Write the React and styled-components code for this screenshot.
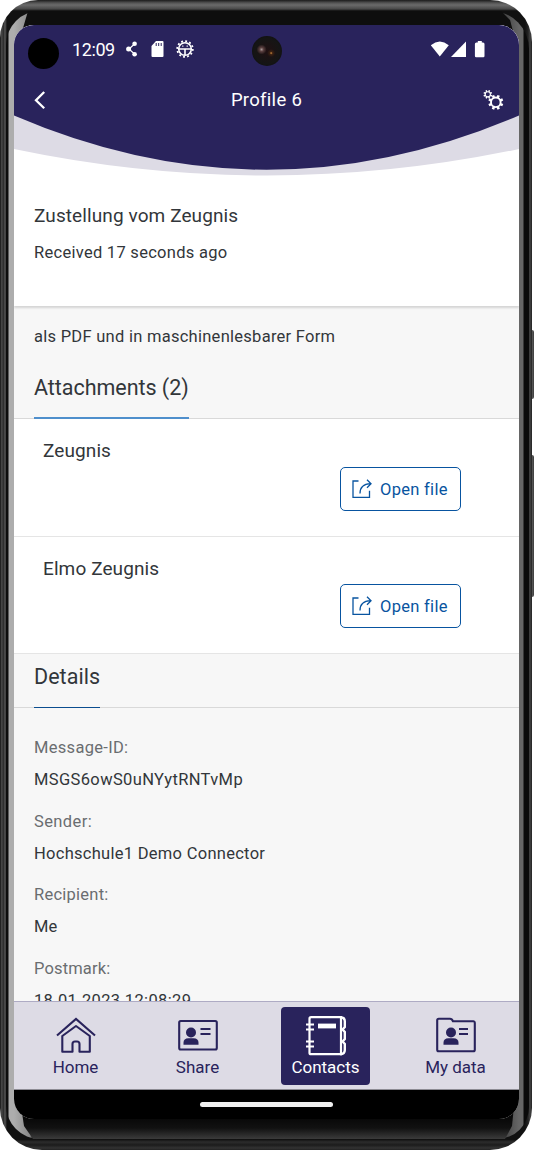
import React from 'react';
import styled, { createGlobalStyle } from 'styled-components';

const Global = createGlobalStyle`
  * { box-sizing: border-box; }
  body { margin: 0; background: #fff; font-family: Roboto, "Liberation Sans", sans-serif; color: #32363a; }
  svg { display: block; }
`;

const NAVY = '#29235c';

const Stage = styled.div`
  position: relative;
  width: 534px;
  height: 1150px;
  overflow: hidden;
`;
const SideKey = styled.i`
  position: absolute;
  left: 530px;
  top: ${p => p.$top}px;
  width: 4px;
  height: ${p => p.$height}px;
  border-radius: 0 2px 2px 0;
  background: linear-gradient(90deg, #222, #5a5a5a 70%, #333);
`;
const Shell = styled.div`
  position: relative;
  width: 532px;
  height: 1150px;
  border-radius: 38px 42px 42px 42px;
  padding: 11px 3px 11px 6px;
  background:
    linear-gradient(180deg, #1b1b1b 0, #555 3px, #6a6a6a 5px, #484848 9px, #0c0c0c 11px) 0 0 / 100% 11px no-repeat,
    linear-gradient(180deg, #0c0c0c 0, #2c2c2c 3px, #1c1c1c 6px, #333 9px, #222 11px) 0 100% / 100% 11px no-repeat,
    linear-gradient(90deg, #111 0, #555 2px, #222 3px, #555 5px, #111 7px, #111 525px, #222 528px, #444 530px, #222 532px);
`;
const Glass = styled.div`
  height: 1128px;
  border-radius: 34px 38px 32px 34px;
  padding: 14px 10px 20px 8px;
  background:
    linear-gradient(90deg, #0c0c0c 0, #0c0c0c 2px, #adadad 3px, #adadad 8px, #888 24px, #111 27px, #111 495px, #444 498px, #666 513px, #666 517px, #0a0a0a 518px);
`;
const TopBezel = styled.div`
  position: absolute;
  left: 21px;
  top: 11px;
  width: 493px;
  height: 24px;
  background: #0e0e0e;
  clip-path: polygon(7px 0, 480px 0, 489px 9px, 493px 24px, 0 24px);
`;
const BottomBezel = styled.div`
  position: absolute;
  left: 21px;
  top: 1106px;
  width: 493px;
  height: 33px;
  background: linear-gradient(180deg, #080808 12px, #111 22px, #3b3b3b 33px);
  clip-path: polygon(0 0, 493px 0, 491px 20px, 484px 33px, 12px 33px, 3px 20px);
`;
const Screen = styled.main`
  position: relative;
  width: 505px;
  height: 1094px;
  border-radius: 20px;
  overflow: hidden;
  display: flex;
  flex-direction: column;
  background: #f7f7f7;
`;
const Header = styled.header`
  display: grid;
  flex: none;
  height: 151px;
  background: #fff;
  color: #fff;
  > * { grid-area: 1 / 1; }
`;
const HeaderContent = styled.div`
  display: flex;
  flex-direction: column;
`;
const StatusBar = styled.div`
  display: flex;
  align-items: center;
  height: 48px;
  padding: 0 33px 0 14px;
`;
const Hole = styled.span`
  width: 31px;
  height: 31px;
  margin: 9px 13px 0 0;
  border-radius: 50%;
  background: #000;
`;
const Clock = styled.span`
  width: 53px;
  padding-top: 1px;
  font-size: 18px;
  line-height: 20px;
  letter-spacing: -0.4px;
`;
const Camera = styled.span`
  width: 30px;
  height: 30px;
  margin: 3px 0 0 58px;
  border-radius: 50%;
  background:
    radial-gradient(circle at 32% 45%, #a89a98 0, #5b4040 2px, transparent 5px),
    radial-gradient(circle at 64% 57%, #d08a3e 0, #3b2112 1.5px, transparent 4px),
    radial-gradient(circle, #201012 0, #151515 60%, #0b0b0b 100%);
`;
const TitleBar = styled.div`
  display: grid;
  grid-template-columns: 40px 1fr 40px;
  align-items: center;
  height: 54px;
  padding: 0 14px;
`;
const Title = styled.h1`
  margin: 0;
  text-align: center;
  font-size: 18.5px;
  font-weight: 400;
  letter-spacing: 0.3px;
`;
const Summary = styled.section`
  flex: none;
  height: 130px;
  padding: 28px 20px 0;
  background: #fff;
  box-shadow: 0 2px 2px rgba(0,0,0,.14);
  z-index: 1;
`;
const Line = styled.div`
  height: ${p => p.$h || 24}px;
  line-height: ${p => p.$h || 24}px;
  font-size: ${p => p.$size || 16}px;
  letter-spacing: ${p => p.$ls || 0}px;
  margin-bottom: ${p => p.$gap || 0}px;
  color: ${p => p.$muted ? '#6a6d70' : '#32363a'};
  white-space: nowrap;
`;
const Intro = styled.section`
  flex: none;
  height: 57px;
  padding: 19px 20px 0;
`;
const SectionHead = styled.div`
  flex: none;
  height: ${p => p.$height}px;
  padding-left: 20px;
  border-bottom: 1px solid #d9d9d9;
  display: flex;
`;
const SectionTitle = styled.h2`
  margin: 0 0 -1px;
  font-weight: 400;
  font-size: 21.5px;
  line-height: 28px;
  letter-spacing: ${p => p.$ls}px;
  padding-top: ${p => p.$pad}px;
  width: ${p => p.$width}px;
  border-bottom: ${p => p.$line};
  white-space: nowrap;
`;
const FileRow = styled.article`
  flex: none;
  height: ${p => p.$height}px;
  padding: 20px 58px 0 29px;
  background: #fff;
  border-bottom: 1px solid #e5e5e5;
`;
const OpenButton = styled.button`
  display: flex;
  align-items: center;
  gap: 8px;
  width: 121px;
  height: 44px;
  margin: ${p => p.$top}px 0 0 auto;
  padding: 0 0 0 11px;
  border: 1px solid #0854a0;
  border-radius: 5px;
  background: #fff;
  color: #0854a0;
  font: 400 16.5px Roboto, sans-serif;
  letter-spacing: 0.3px;
  white-space: nowrap;
`;
const Details = styled.section`
  flex: 1;
  min-height: 0;
  overflow: hidden;
  padding: 28px 20px 0;
`;
const Nav = styled.nav`
  flex: none;
  display: flex;
  height: 89px;
  padding: 5px 0 4px 17px;
  background: #dddbe5;
  border-top: 1px solid #aeabc4;
  border-bottom: 1px solid #8d8c94;
`;
const Tab = styled.a`
  display: flex;
  flex: none;
  flex-direction: column;
  align-items: center;
  width: 89px;
  height: 78px;
  margin-left: ${p => p.$gap}px;
  padding-top: 9px;
  border-radius: 4px;
  background: ${p => p.$active ? NAVY : 'transparent'};
  color: ${p => p.$active ? '#fff' : NAVY};
  font-size: 17px;
  line-height: 20px;
`;
const GestureBar = styled.footer`
  flex: none;
  display: flex;
  justify-content: center;
  height: 29px;
  padding-top: 12px;
  background: #000;
  &::before { content: ''; width: 133px; height: 5px; border-radius: 3px; background: #f0f0f0; }
`;
const Glyph = styled.svg`
  flex: none;
  margin-left: ${p => p.$left || 0};
`;

const Waves = () => (
  <svg width="505" height="151" viewBox="0 0 505 151">
    <path d="M0 0H505V124Q252.5 177 0 124Z" fill="#dddbe5" />
    <path d="M0 0H505V90.5Q252.5 199 0 90.5Z" fill={NAVY} />
  </svg>
);
const ShareDots = () => (
  <Glyph width="12" height="16" viewBox="0 0 12 16" fill="#fff" $left="1px">
    <path d="M9 2.5 3 8l6 5.5" fill="none" stroke="#fff" strokeWidth="1.2" />
    <circle cx="8.6" cy="2.7" r="2.3" /><circle cx="2.6" cy="8" r="2.5" /><circle cx="8.6" cy="13.3" r="2.3" />
  </Glyph>
);
const SdCard = () => (
  <Glyph width="13" height="16" viewBox="0 0 13 16" $left="13px">
    <path d="M5 0h6.5q1 0 1 1v14q0 1-1 1h-10q-1 0-1-1V5Z" fill="#fff" />
    <path d="M5.2 2v3M7.7 2v3M10.2 2v3" stroke={NAVY} strokeWidth="1" />
  </Glyph>
);
const Bug = () => (
  <Glyph width="18" height="18" viewBox="0 0 18 18" $left="12px" fill="none" stroke="#fff">
    <circle cx="9" cy="9" r="7.8" strokeWidth="1.8" strokeDasharray="1.9 2.18" />
    <circle cx="9" cy="9" r="6.3" strokeWidth="1.6" />
    <path d="M3 9h12M9 9v6" strokeWidth="1.6" />
    <path d="M6.2 6.2h1.2M10.6 6.2h1.2" strokeWidth="1.2" />
  </Glyph>
);
const Signals = () => (
  <Glyph width="56" height="17" viewBox="0 0 56 17" fill="#fff" $left="auto">
    <path d="M.8 4.2Q9.8 -3.2 18.8 4.2L9.8 15.5Z" />
    <path d="M36 .5V16H21Z" />
    <path d="M47.8 0h4v1.5H53q1.5 0 1.5 1.5V15q0 1.2-1.2 1.2h-7.2q-1.2 0-1.2-1.2V3q0-1.5 1.5-1.5h1.4Z" />
  </Glyph>
);
const Back = () => (
  <svg width="22" height="20" viewBox="0 0 22 20" fill="none" stroke="#fff" strokeWidth="2.3">
    <path d="M16.2 2 8 10.2l8.2 8" />
  </svg>
);
const Gear = ({ cx, cy, r, w, tooth }) => (
  <g fill="none" stroke="#fff">
    <circle cx={cx} cy={cy} r={r} strokeWidth={w} />
    {[0, 45, 90, 135, 180, 225, 270, 315].map(a => (
      <path key={a} d={`M${cx} ${cy - r}v${-tooth}`} strokeWidth={w * 1.35} transform={`rotate(${a + 22.5} ${cx} ${cy})`} />
    ))}
  </g>
);
const Gears = () => (
  <Glyph width="22" height="22" viewBox="0 0 22 22" $left="17px">
    <Gear cx={5.8} cy={5.3} r={2.6} w={1.1} tooth={1.8} />
    <Gear cx={13.8} cy={13.3} r={4.8} w={1.9} tooth={2.7} />
  </Glyph>
);
const ShareFile = () => (
  <Glyph width="20" height="20" viewBox="0 0 20 20" fill="none" stroke="#0854a0" strokeWidth="1.3">
    <path d="M6.5 2H1v16.3h16.5v-6.5" />
    <path d="M8 14.5C8 8.5 11 5.1 18.5 4.7M15 .8l4 3.9-4 4" />
  </Glyph>
);
const HomeIcon = () => (
  <svg width="40" height="41" viewBox="0 0 40 41" fill="none" stroke="currentColor" strokeWidth="2.1">
    <path d="M1 19.5 20 3l19 16.5" />
    <path d="M6.3 20v15.7H16.5V28q0-2.5 2.5-2.5h2q2.5 0 2.5 2.5v7.7h10.3V20L20 10Z" strokeLinejoin="round" />
  </svg>
);
const Person = () => (
  <g>
    <circle cx="13" cy="16.5" r="5" fill="currentColor" stroke="none" />
    <path d="M5.5 28.8v-2q0-4.5 5-4.5h5q5 0 5 4.5v2Z" fill="currentColor" stroke="none" />
  </g>
);
const CardIcon = () => (
  <svg width="40" height="41" viewBox="0 0 40 41" fill="none" stroke="currentColor" strokeWidth="2.1">
    <rect x="1.2" y="5" width="37.6" height="28.5" rx="1.5" />
    <Person />
    <path d="M22.5 13h10M22.5 18h10" />
  </svg>
);
const BookIcon = () => (
  <svg width="40" height="41" viewBox="0 0 40 41" fill="none" stroke="currentColor" strokeWidth="2.2">
    <path d="M36 1.2H5q-1.5 0-1.5 1.5v34q0 1.5 1.5 1.5H35V1" />
    <path d="M35 1.2q3.8.5 3.8 4V11l-2.2 2.5 2.2 2.5v7l-2.2 2.5 2.2 2.5v6q0 4-4.5 4.2" strokeWidth="2.4" />
    <path d="M12 10h18" strokeWidth="4.8" />
    <path d="M0 8.5h8M0 13.5h8M0 25.5h8M0 30.5h8" strokeWidth="2" />
  </svg>
);
const FolderIcon = () => (
  <svg width="40" height="41" viewBox="0 0 40 41" fill="none" stroke="currentColor" strokeWidth="2.1">
    <path d="M1.2 4.3q0-1.5 1.5-1.5H14q2 0 3 2.5h20.5q1.3 0 1.3 1.5v27q0 1.5-1.5 1.5H2.7q-1.5 0-1.5-1.5Z" />
    <g transform="translate(2)"><Person /></g>
    <path d="M23 13h9M23 18h9" />
  </svg>
);

const files = [
  { name: 'Zeugnis', height: 118, top: 4 },
  { name: 'Elmo Zeugnis', height: 117, top: 3 },
];
const details = [
  { label: 'Message-ID:', value: 'MSGS6owS0uNYytRNTvMp', l: 0.3, v: 0.37 },
  { label: 'Sender:', value: 'Hochschule1 Demo Connector', l: 0.4, v: 0.28 },
  { label: 'Recipient:', value: 'Me', l: 0.25, v: 0 },
  { label: 'Postmark:', value: '18.01.2023 12:08:29', l: 0.15, v: 0.35 },
];
const tabs = [
  { name: 'Home', Icon: HomeIcon, gap: 0 },
  { name: 'Share', Icon: CardIcon, gap: 33 },
  { name: 'Contacts', Icon: BookIcon, gap: 39, active: true },
  { name: 'My data', Icon: FolderIcon, gap: 41 },
];

export default function App() {
  return (
    <Stage>
      <Global />
      <SideKey $top={330} $height={69} />
      <SideKey $top={455} $height={142} />
      <Shell>
        <TopBezel />
        <BottomBezel />
        <Glass>
          <Screen>
            <Header>
              <Waves />
              <HeaderContent>
                <StatusBar>
                  <Hole />
                  <Clock>12:09</Clock>
                  <ShareDots /><SdCard /><Bug />
                  <Camera />
                  <Signals />
                </StatusBar>
                <TitleBar>
                  <Back />
                  <Title>Profile 6</Title>
                  <Gears />
                </TitleBar>
              </HeaderContent>
            </Header>
            <Summary>
              <Line $size={19} $gap={13} $ls={0.1}>Zustellung vom Zeugnis</Line>
              <Line $size={16.5} $ls={0.28}>Received 17 seconds ago</Line>
            </Summary>
            <Intro><Line $size={16.5} $ls={0.27}>als PDF und in maschinenlesbarer Form</Line></Intro>
            <SectionHead $height={56}>
              <SectionTitle $ls={-0.04} $pad={11} $width={155} $line="2px solid #4f8fcc">Attachments (2)</SectionTitle>
            </SectionHead>
            {files.map(f => (
              <FileRow key={f.name} $height={f.height}>
                <Line $size={19} $ls={0.1}>{f.name}</Line>
                <OpenButton $top={f.top}><ShareFile />Open file</OpenButton>
              </FileRow>
            ))}
            <SectionHead $height={54}>
              <SectionTitle $ls={0.05} $pad={9} $width={66} $line="1px solid #0b4d8f">Details</SectionTitle>
            </SectionHead>
            <Details>
              {details.map(d => (
                <React.Fragment key={d.label}>
                  <Line $muted $size={16.5} $gap={8} $ls={d.l}>{d.label}</Line>
                  <Line $size={16.5} $gap={17.6} $ls={d.v}>{d.value}</Line>
                </React.Fragment>
              ))}
            </Details>
            <Nav>
              {tabs.map(({ name, Icon, active, gap }) => (
                <Tab key={name} $active={active} $gap={gap}><Icon />{name}</Tab>
              ))}
            </Nav>
            <GestureBar />
          </Screen>
        </Glass>
      </Shell>
    </Stage>
  );
}
